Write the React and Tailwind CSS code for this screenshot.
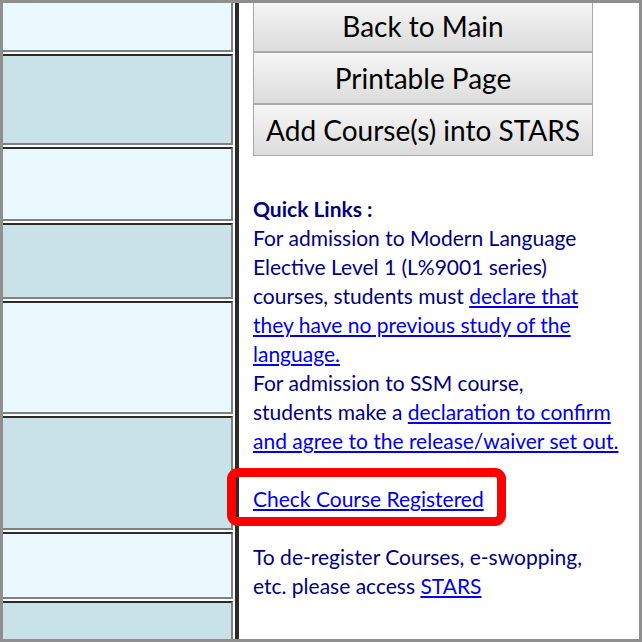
import React from 'react';

// Left column cells (height in px, shade)
const CELLS = [
    { h: 49, dark: false, first: true },
    { h: 91, dark: true },
    { h: 74, dark: false },
    { h: 76, dark: true },
    { h: 113, dark: false },
    { h: 114, dark: true },
    { h: 67, dark: false },
    { h: 60, dark: true },
];

const Cell = ({ h, dark, first }) => (
    <div
        style={{ height: h }}
        className={`shrink-0 border-r-2 border-b-2 border-r-[#808080] border-b-[#808080] ${first ? '' : 'border-t-2 border-t-[#2b2b2b]'} ${dark ? 'bg-[#c9e2e8]' : 'bg-[#eaf9fe]'}`}
    />
);

const ActionButton = ({ children, className = '' }) => (
    <button className={`w-[340px] h-[52px] shrink-0 border border-[#a9a9a9] bg-gradient-to-b from-[#f6f6f6] to-[#dcdcdc] text-black text-[28px] leading-none ${className}`}>
        {children}
    </button>
);

const Link = ({ children }) => (
    <a href="#" className="text-[#0000ee] underline underline-offset-2">{children}</a>
);

export default function App() {
    return (
        <div className="w-[642px] h-[642px] bg-[#8f8f8f] p-[3px] font-['Lato',sans-serif]">
            <div className="w-full h-full bg-white flex overflow-hidden">
                {/* left table column */}
                <div className="w-[230px] shrink-0 flex flex-col gap-[2px]">
                    {CELLS.map((c, i) => (
                        <Cell key={i} {...c} />
                    ))}
                </div>
                <div className="w-[2px] shrink-0" />
                <div className="w-[4px] shrink-0 bg-[#2b2b2b]" />

                {/* right panel */}
                <div className="flex-1 pl-[14px] flex flex-col">
                    <div className="flex flex-col -mt-[3px]">
                        <ActionButton>Back to Main</ActionButton>
                        <ActionButton>Printable Page</ActionButton>
                        <ActionButton>Add Course(s) into STARS</ActionButton>
                    </div>

                    <div className="mt-[38px] text-[21px] leading-[29px] text-[#000080] whitespace-nowrap">
                        <b>Quick Links :</b>
                        <br />
                        For admission to Modern Language
                        <br />
                        Elective Level 1 (L%9001 series)
                        <br />
                        courses, students must <Link>declare that</Link>
                        <br />
                        <Link>they have no previous study of the</Link>
                        <br />
                        <Link>language.</Link>
                        <br />
                        For admission to SSM course,
                        <br />
                        students make a <Link>declaration to confirm</Link>
                        <br />
                        <Link>and agree to the release/waiver set out.</Link>
                        <br />
                        <br />
                        <span className="relative inline-block">
                            <Link>Check Course Registered</Link>
                            {/* red highlight annotation */}
                            <span className="absolute left-[-26px] top-[-16px] w-[279px] h-[58px] border-[9px] border-[#ff0000] rounded-[11px] pointer-events-none" />
                        </span>
                        <br />
                        <br />
                        To de-register Courses, e-swopping,
                        <br />
                        etc. please access <Link>STARS</Link>
                    </div>
                </div>
            </div>
        </div>
    );
}
